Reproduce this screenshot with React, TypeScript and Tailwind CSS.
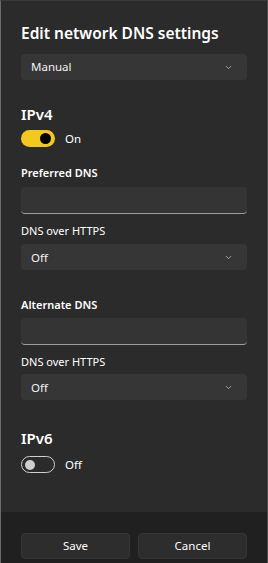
import { ChevronDown } from 'lucide-react';

function Select({ value }: { value: string }) {
  return (
    <div className="flex h-[26px] items-center justify-between rounded-[4px] bg-[#363636] pl-[10px] pr-[14px] text-[11.5px] text-[#f2f2f2]">
      <span>{value}</span>
      <ChevronDown className="h-[9px] w-[9px] text-[#c8c8c8]" strokeWidth={2} />
    </div>
  );
}

function TextBox() {
  return <div className="h-[27px] rounded-[4px] border-b border-[#9d9d9d] bg-[#343434]" />;
}

function Toggle({ on }: { on: boolean }) {
  return on ? (
    <div className="flex h-[17px] w-[34px] items-center justify-end rounded-full bg-[#f4c91d] pr-[4px]">
      <div className="h-[11px] w-[11px] rounded-full bg-black" />
    </div>
  ) : (
    <div className="flex h-[17px] w-[34px] items-center rounded-full border border-[#cfcfcf] pl-[3px]">
      <div className="h-[10px] w-[10px] rounded-full bg-[#d0d0d0]" />
    </div>
  );
}

export default function App() {
  return (
    <div
      className="flex h-[563px] w-[268px] flex-col overflow-hidden border-l border-r border-t border-l-[#6a6a6a] border-r-[#4a4a4a] border-t-[#3a3a3a] bg-[#2b2b2b] text-white"
      style={{ fontFamily: '"Noto Sans", "Open Sans", sans-serif' }}
    >
      <div className="flex-1 px-[20px]">
        <div className="mt-[20px] text-[15.5px] font-semibold leading-[24px]">Edit network DNS settings</div>
        <div className="mt-[9px]">
          <Select value="Manual" />
        </div>

        <div className="mt-[22px] text-[15px] font-semibold leading-[24px]">IPv4</div>
        <div className="mt-[4px] flex items-center gap-[10px]">
          <Toggle on />
          <span className="text-[11.5px]">On</span>
        </div>

        <div className="mt-[18px] text-[11px] font-semibold leading-[16px]">Preferred DNS</div>
        <div className="mt-[6px]">
          <TextBox />
        </div>
        <div className="mt-[9px] text-[11px] leading-[16px]">DNS over HTTPS</div>
        <div className="mt-[5px]">
          <Select value="Off" />
        </div>

        <div className="mt-[27px] text-[11px] font-semibold leading-[16px]">Alternate DNS</div>
        <div className="mt-[5px]">
          <TextBox />
        </div>
        <div className="mt-[9px] text-[11px] leading-[16px]">DNS over HTTPS</div>
        <div className="mt-[4px]">
          <Select value="Off" />
        </div>

        <div className="mt-[26px] text-[15px] font-semibold leading-[24px]">IPv6</div>
        <div className="mt-[6px] flex items-center gap-[10px]">
          <Toggle on={false} />
          <span className="text-[11.5px]">Off</span>
        </div>
      </div>

      <div className="h-[51px] bg-[#202020] px-[20px] pt-[21px]">
        <div className="grid grid-cols-2 gap-[8px]">
          <button className="h-[26px] rounded-[4px] border border-[#353535] bg-[#2d2d2d] text-[11.5px] text-white">Save</button>
          <button className="h-[26px] rounded-[4px] border border-[#353535] bg-[#2d2d2d] text-[11.5px] text-white">Cancel</button>
        </div>
      </div>
    </div>
  );
}
